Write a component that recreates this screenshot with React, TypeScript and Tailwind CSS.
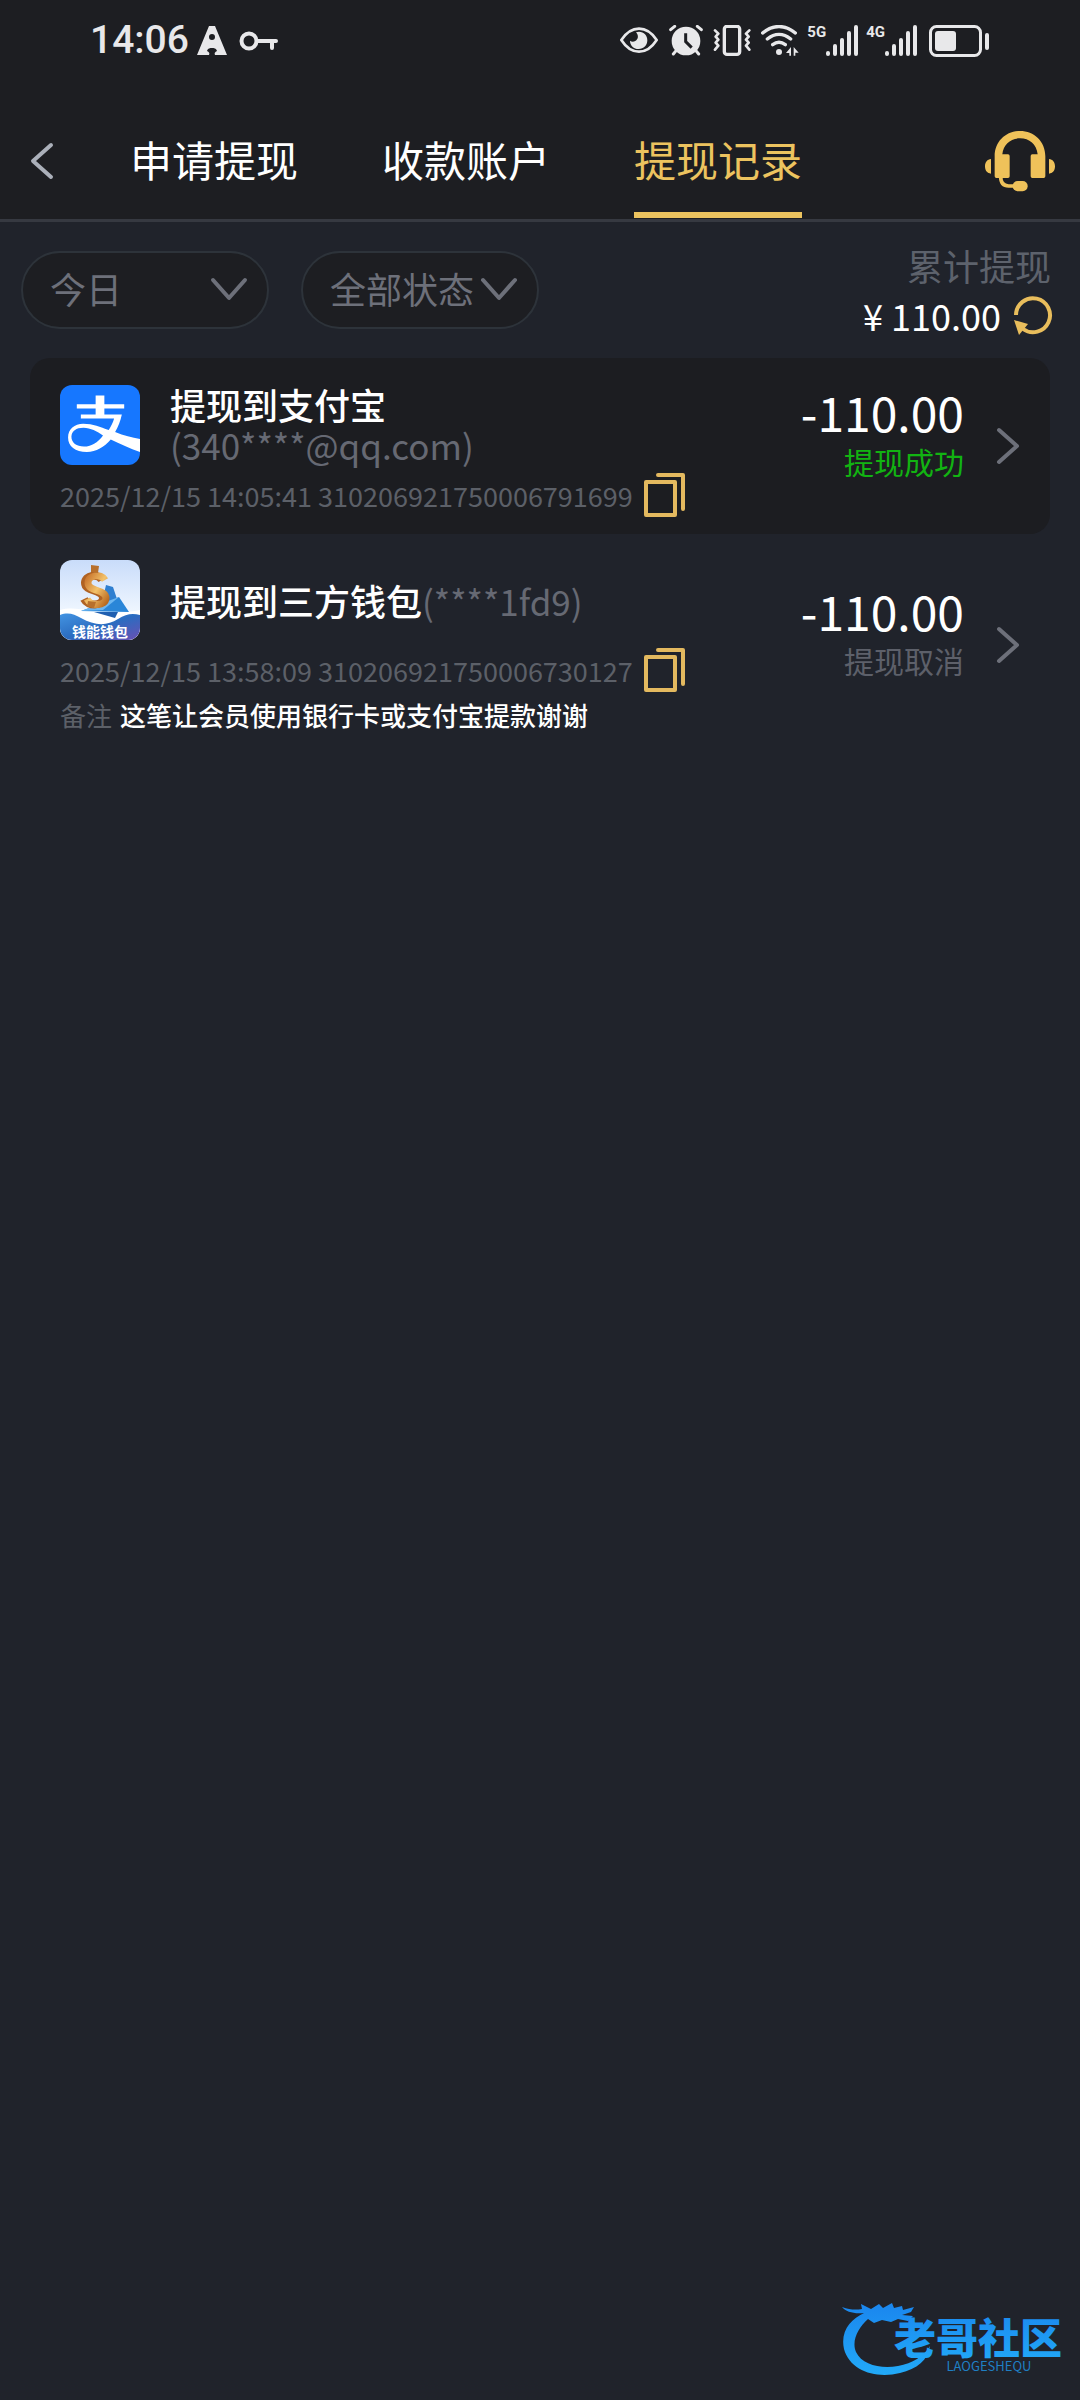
import React, { useState } from 'react';

interface WithdrawRecord {
    id: string;
    title: string;
    account: string;
    time: string;
    amount: string;
    status: string;
    success: boolean;
    logo: React.ReactNode;
    breakAccount?: boolean;
    remark?: string;
}

const AlipayLogo = () => (
    <svg className="block size-20 rounded-xl" viewBox="30 29 238 238" aria-label="支付宝">
        <path fill="#1677ff" d="M30 29h238v238H30z" />
        <path fill="#fff" d="M136 60h26v26h59v13h-59v18h52c-4 20-11 37-20 52 26 11 50 16 74 21v38c-30-10-60-25-87-37-20 23-43 37-71 37-35 0-56-17-56-43 0-25 19-41 45-41 30 0 50 9 76 19 7-10 12-21 16-34H92v-12h44V99H80V86h56z" />
        <path fill="#1677ff" d="M100 156c-22 0-36 10-36 27 0 18 15 29 37 29 24 0 42-13 57-33-18-12-37-23-58-23z" />
    </svg>
);

const WalletLogo = () => (
    <svg className="block size-20 rounded-xl" viewBox="0 0 80 80" aria-label="钱能钱包">
        <defs>
            <linearGradient id="sky" x1="0" y1="0" x2="0" y2="1">
                <stop offset="0" stopColor="#c9dcfa" />
                <stop offset="0.7" stopColor="#f2f8ff" />
            </linearGradient>
            <linearGradient id="sea" x1="0" y1="0" x2="1" y2="1">
                <stop offset="0" stopColor="#4394e2" />
                <stop offset="0.5" stopColor="#2b6cc0" />
                <stop offset="1" stopColor="#6a50b4" />
            </linearGradient>
            <linearGradient id="gold" x1="0" y1="0" x2="1" y2="1">
                <stop offset="0" stopColor="#c9752c" />
                <stop offset="0.5" stopColor="#f3c26a" />
                <stop offset="1" stopColor="#b8681f" />
            </linearGradient>
        </defs>
        <path fill="url(#sky)" d="M0 0h80v80H0z" />
        <path fill="#fff" d="M0 50c20-6 40 8 80 0v30H0z" />
        <path fill="url(#sea)" d="M0 55c8-3 14-1 21 3 14 8 26 8 37 1 8-5 14-6 22-4v25H0z" />
        <path fill="#2f7fd0" d="M46 25l7 2 4 12-16 8z" />
        <path fill="#2a86d8" d="M59 37L21 51l48 1z" />
        <path fill="#6db6f0" d="M59 37L21 51l22-1z" />
        <path fill="#1f5fb0" d="M34 52l21 6 3-6z" />
        <path fill="none" stroke="#b06222" strokeWidth="8" d="M42 20c-4-7-17-5-17 3 0 9 18 6 18 15 0 8-15 9-19 1" />
        <path fill="none" stroke="url(#gold)" strokeWidth="7" d="M45 20c-4-7-17-5-17 3 0 9 18 6 18 15 0 8-15 9-19 1" />
        <path fill="#b8702c" d="M31 5l8 1-1 7-7-1zM28 41l8 1-2 6-7-2z" />
        <text x="40" y="77" textAnchor="middle" fill="#fff" fontSize="14" fontWeight="700">钱能钱包</text>
    </svg>
);

const Chevron = ({ className }: { className: string }) => (
    <svg className={className} viewBox="0 0 38 24" fill="none" stroke="currentColor" strokeWidth="4" strokeLinecap="round" strokeLinejoin="round">
        <path d="M3 3l16 18L35 3" />
    </svg>
);

const SignalBars = () => (
    <svg className="h-8 w-8" viewBox="0 0 32 32" fill="none" stroke="currentColor" strokeWidth="4" strokeLinecap="round">
        <path d="M2 28v1M9 21v8M16 15v14M23 8v21M30 2v27" />
    </svg>
);

const StatusBar = () => (
    <div className="flex h-[81px] items-center pl-[90px] pr-[90px] text-[#e8e8ea]">
        <span className="font-['Roboto','Noto_Sans_CJK_SC',sans-serif] text-[39px] font-medium leading-none">14:06</span>
        <svg className="ml-2 h-[30px] w-[30px]" viewBox="0 0 30 30">
            <path fill="currentColor" fillRule="evenodd" d="M12 0h6l12 29H18c-1-2 0-3 2-4-1-3-3-3-5-3s-4 0-5 3c2 1 3 2 2 4H0zM15 8a3 3 0 100 6 3 3 0 000-6z" />
        </svg>
        <svg className="ml-3 h-5 w-10" viewBox="0 0 40 20" fill="none" stroke="currentColor" strokeWidth="4">
            <circle cx="10" cy="10" r="7.5" />
            <path strokeLinecap="round" d="M18 10h19M33 10v7" />
        </svg>

        <div className="ml-auto flex items-center">
            {/* Eye comfort */}
            <svg className="h-8 w-[38px]" viewBox="33 42 114 96">
                <path fill="none" stroke="currentColor" strokeWidth="8" strokeLinejoin="round" d="M37 87c14-21 33-34 53-34s39 13 53 34c-14 22-33 35-53 35s-39-13-53-35z" />
                <path fill="currentColor" d="M90 62c15 0 25 11 25 26s-11 26-26 26-26-11-26-25c5 4 14 4 19-1 7-7 6-16-1-24 3-1 6-2 9-2z" />
            </svg>
            {/* Alarm */}
            <svg className="ml-[11px] h-8 w-[34px]" viewBox="180 42 102 96">
                <circle cx="231" cy="90" r="43" fill="currentColor" />
                <path fill="none" stroke="currentColor" strokeWidth="9" strokeLinecap="round" d="M185 56l12-10M277 56l-12-10M202 118l-9 11M260 118l9 11" />
                <path fill="none" stroke="#1d1e22" strokeWidth="9" d="M230 67v25l18 18" />
            </svg>
            {/* Vibrate */}
            <svg className="ml-2.5 h-8 w-[38px]" viewBox="312 42 114 96" fill="none" stroke="currentColor" strokeWidth="10">
                <rect x="346" y="46" width="46" height="84" rx="8" />
                <path strokeWidth="8" strokeLinejoin="round" strokeLinecap="round" d="M318 58l10 10-8 9 8 9-8 9 8 9-10 12M421 58l-10 10 8 9-8 9 8 9-8 9 10 12" />
            </svg>
            {/* Wi-Fi */}
            <svg className="ml-2.5 h-8 w-[38px]" viewBox="453 42 114 96" fill="none" stroke="currentColor" strokeWidth="10" strokeLinecap="round">
                <path d="M458 66c30-26 68-26 98 0M472 84c22-18 48-18 70 0M488 101c12-9 26-9 38 0" />
                <circle cx="507" cy="123" r="9" fill="currentColor" stroke="none" />
                <path fill="currentColor" stroke="none" d="M543 108v26h-5v-8h-10zM551 108l15 17h-10v9h-5z" />
            </svg>
            <span className="ml-2 self-start font-['Roboto',sans-serif] text-[15px] font-bold leading-none">5G</span>
            <SignalBars />
            <span className="ml-2 self-start font-['Roboto',sans-serif] text-[15px] font-bold leading-none">4G</span>
            <SignalBars />
            <svg className="ml-3 h-8 w-[61px]" viewBox="0 0 61 32">
                <rect x="1.5" y="1.5" width="50" height="29" rx="6" fill="none" stroke="currentColor" strokeWidth="3" />
                <rect x="6" y="6" width="21" height="20" rx="3" fill="currentColor" />
                <rect x="56" y="8" width="4" height="17" rx="2" fill="currentColor" />
            </svg>
        </div>
    </div>
);

const tabs = ['申请提现', '收款账户', '提现记录'];

const Header = () => {
    const [active, setActive] = useState('提现记录');

    return (
        <header className="border-b-[3px] border-[#363941] bg-[#1d1e22]">
            <StatusBar />
            <nav className="mt-[23px] flex h-[115px] items-center pl-[30px] pr-[25px]">
                <button aria-label="返回" className="text-[#abb0ba]">
                    <svg className="block h-10 w-6" viewBox="0 0 24 40" fill="none" stroke="currentColor" strokeWidth="4" strokeLinecap="round" strokeLinejoin="round">
                        <path d="M21 3L3 19l18 16" />
                    </svg>
                </button>
                <div className="ml-[76px] flex gap-[84px] self-start">
                    {tabs.map((tab) => (
                        <button
                            key={tab}
                            onClick={() => setActive(tab)}
                            className={`h-[114px] border-b-6 text-[42px] ${tab === active ? 'border-[#ecc35f] text-[#ecc35f]' : 'border-transparent text-white'}`}
                        >
                            {tab}
                        </button>
                    ))}
                </div>
                <button aria-label="客服" className="ml-auto text-[#efc25a]">
                    <svg className="block h-[61px] w-[70px]" viewBox="45 29 210 183">
                        <path fill="currentColor" d="M74 165v-60c0-45 34-76 76-76s76 31 76 76v60q0 5-5 5h-34q-5 0-5-5v-61q0-5 5-5h16c-3-30-25-48-53-48s-50 18-53 48h17q5 0 5 5v61q0 5-5 5H79q-5 0-5-5z" />
                        <path fill="currentColor" d="M63 113v44c-11-1-18-9-18-22s7-21 18-22zM237 113v44c11-1 18-9 18-22s-7-21-18-22z" />
                        <path fill="none" stroke="currentColor" strokeWidth="11" d="M92 165c0 20 8 29 24 29h18" />
                        <rect x="128" y="179" width="45" height="31" rx="15" fill="currentColor" />
                    </svg>
                </button>
            </nav>
        </header>
    );
};

interface FilterSelectProps {
    label: string;
    options: string[];
    className: string;
}

const FilterSelect: React.FC<FilterSelectProps> = ({ label, options, className }) => (
    <div className={`relative ${className}`}>
        <select
            aria-label={label}
            className="block h-[78px] w-full appearance-none rounded-full border-2 border-[#2d333a] bg-[#1d1e22] pb-1 pl-[27px] text-4xl text-[#6d707a] outline-none"
        >
            {options.map((opt) => (
                <option key={opt}>{opt}</option>
            ))}
        </select>
        <Chevron className="pointer-events-none absolute right-[21px] top-[26px] h-6 w-[38px] text-[#6d707a]" />
    </div>
);

const Filters = () => (
    <section className="flex h-[136px] items-center pl-[21px] pr-[27px]">
        <FilterSelect label="日期" options={['今日', '昨日', '近7日', '近30日']} className="w-[248px]" />
        <FilterSelect label="状态" options={['全部状态', '提现成功', '提现取消']} className="ml-8 w-[238px]" />
        <div className="ml-auto flex flex-col items-end text-4xl leading-[50px]">
            <span className="pr-0.5 text-[#5d626c]">累计提现</span>
            <div className="flex items-center gap-3 text-white">
                <span>¥ 110.00</span>
                <button aria-label="刷新" className="text-[#e8bd5c]">
                    <svg className="block size-10" viewBox="0 0 40 40">
                        <path fill="none" stroke="currentColor" strokeWidth="4" d="M3 20a17 17 0 1 1 7 14" />
                        <path fill="currentColor" d="M1 25l14 4-9 11z" />
                    </svg>
                </button>
            </div>
        </div>
    </section>
);

const RecordCard = ({ record }: { record: WithdrawRecord }) => (
    <li className={`flex items-center rounded-[20px] pl-[30px] pr-[30px] ${record.success ? 'bg-[#1c1d21]' : ''}`}>
        <div className="flex-1 pb-[17px] pt-[26px]">
            <div className="flex min-h-20 items-center gap-[30px]">
                {record.logo}
                <p className="text-4xl leading-10 text-white">
                    <span className="font-medium">{record.title}</span>
                    {record.breakAccount && <br />}
                    <span className="text-[35px] text-[#666973]">{record.account}</span>
                </p>
            </div>
            <div className="mt-2 flex h-11 items-center gap-2.5">
                <span className="text-[27px] leading-none text-[#5c6068]">
                    {record.time} {record.id}
                </span>
                <button aria-label="复制" className="text-[#e3b95f]">
                    <svg className="block h-11 w-[42px]" viewBox="0 0 42 44" fill="none" stroke="currentColor" strokeWidth="4" strokeLinejoin="round" strokeLinecap="round">
                        <path d="M3 9h29v33H3zM15 2h25v34" />
                    </svg>
                </button>
            </div>
            {record.remark && (
                <p className="flex h-[46px] items-center gap-2 text-[26px] leading-none text-[#5c6068]">
                    备注 <span className="font-medium text-white">{record.remark}</span>
                </p>
            )}
        </div>
        <div className="flex items-center gap-8">
            <div className="pb-6 text-right">
                <p className="text-5xl leading-[54px] text-white">{record.amount}</p>
                <p className={`text-[30px] leading-[46px] ${record.success ? 'text-[#12b312]' : 'text-[#5d606a]'}`}>{record.status}</p>
            </div>
            <svg className="h-10 w-6 text-[#6d707a]" viewBox="0 0 24 40" fill="none" stroke="currentColor" strokeWidth="4" strokeLinecap="round" strokeLinejoin="round">
                <path d="M3 4l18 16L3 36" />
            </svg>
        </div>
    </li>
);

const Watermark = () => (
    <div className="absolute bottom-6 right-4 text-[#1c97f0]">
        <svg className="block h-[74px] w-[222px]" viewBox="0 0 222 74">
            <defs>
                <linearGradient id="brand" x1="0" y1="0" x2="0" y2="1">
                    <stop offset="0" stopColor="#1a86ee" />
                    <stop offset="1" stopColor="#22aaf8" />
                </linearGradient>
            </defs>
            <path fill="url(#brand)" d="M0 5c8 3 14 3 20 2l-1-5 10 5 8-5 4 4 9-5 2 5 8-2 1 4 11-3-3 5-9 3 11 1-5 5-10-2-7 3-9-2-8 3-6-4C17 25 9 38 14 50c6 13 25 17 42 14 15-3 25-9 32-20-2 14-13 23-30 27C34 77 8 69 2 47-2 29 9 17 22 11 12 12 4 10 0 5z" />
            <text x="136" y="52" textAnchor="middle" fill="url(#brand)" fontSize="42" fontWeight="900">老哥社区</text>
            <text x="147" y="69" textAnchor="middle" fill="#1f7fc4" fontSize="13">LAOGESHEQU</text>
        </svg>
    </div>
);

const records: WithdrawRecord[] = [
    {
        id: '310206921750006791699',
        title: '提现到支付宝',
        account: '(340****@qq.com)',
        time: '2025/12/15 14:05:41',
        amount: '-110.00',
        status: '提现成功',
        success: true,
        logo: <AlipayLogo />,
        breakAccount: true,
    },
    {
        id: '310206921750006730127',
        title: '提现到三方钱包',
        account: '(****1fd9)',
        time: '2025/12/15 13:58:09',
        amount: '-110.00',
        status: '提现取消',
        success: false,
        logo: <WalletLogo />,
        remark: '这笔让会员使用银行卡或支付宝提款谢谢',
    },
];

const App = () => {
    return (
        <div className="relative min-h-screen bg-[#20232b] font-['Noto_Sans_CJK_SC',sans-serif]">
            <Header />
            <main>
                <Filters />
                <ul className="mx-[30px]">
                    {records.map((record) => (
                        <RecordCard key={record.id} record={record} />
                    ))}
                </ul>
            </main>
            <Watermark />
        </div>
    );
};

export default App;
